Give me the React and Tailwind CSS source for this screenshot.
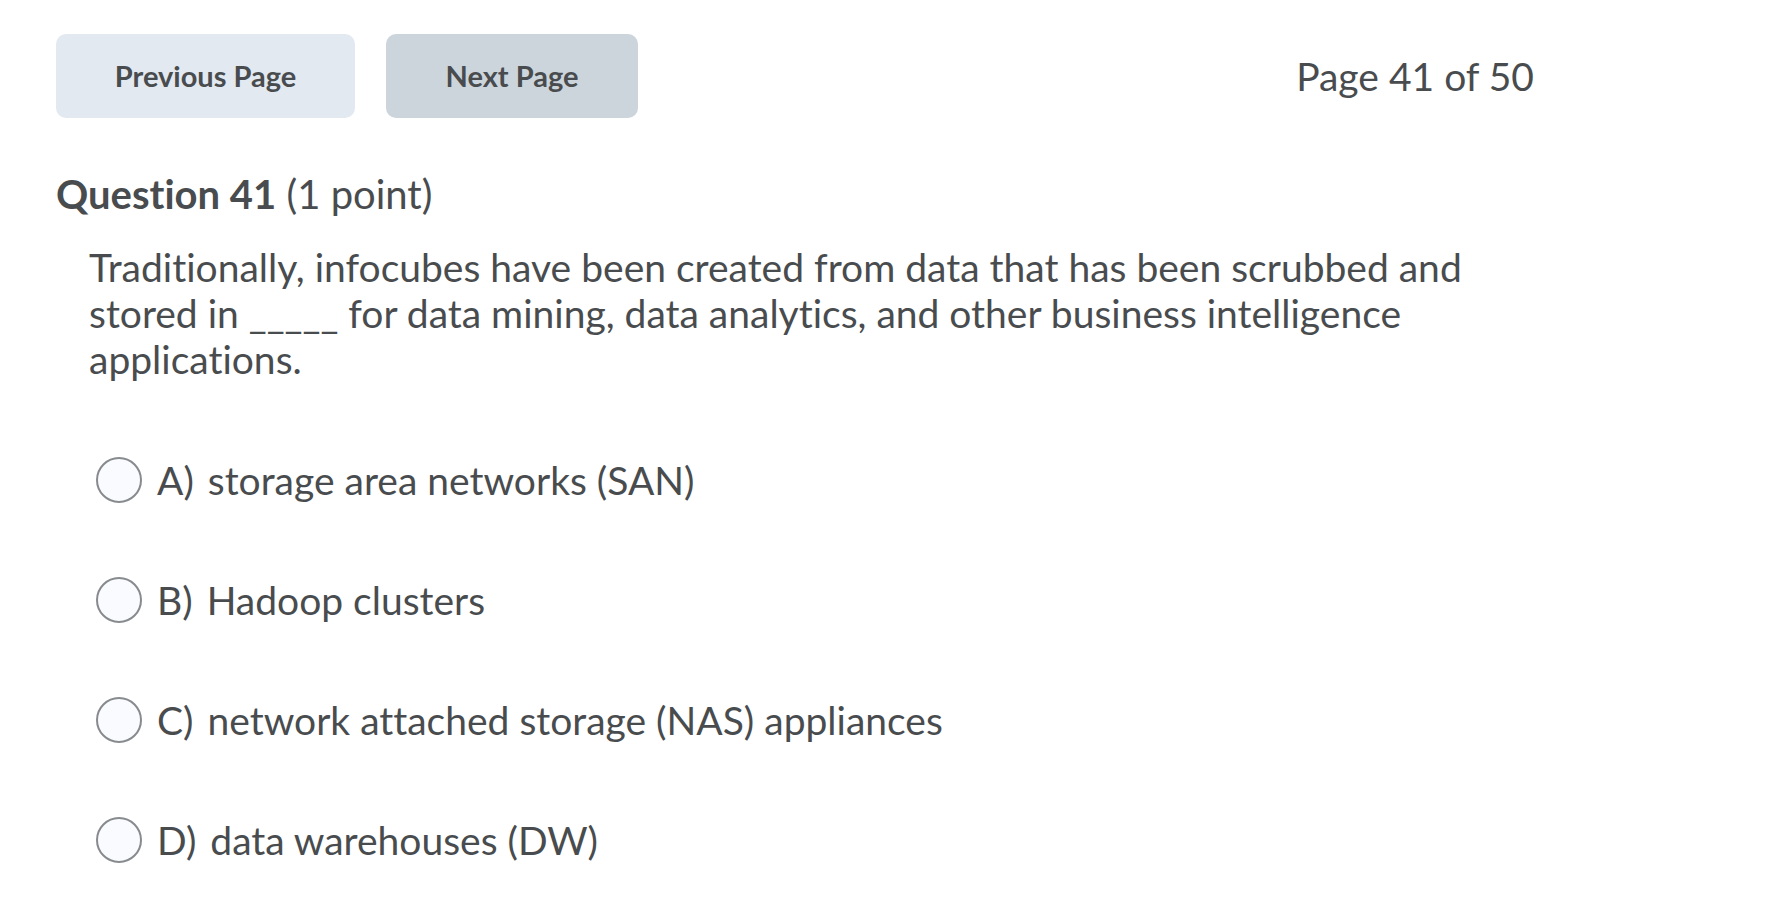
import React from "react";

const options = [
  { key: "A)", text: "storage area networks (SAN)" },
  { key: "B)", text: "Hadoop clusters" },
  { key: "C)", text: "network attached storage (NAS) appliances" },
  { key: "D)", text: "data warehouses (DW)" },
];

export default function App() {
  return (
    <div
      className="min-h-screen bg-white text-[#494c4e] pl-[56px] pt-[34px] [font-variant-ligatures:none]"
      style={{ fontFamily: "Lato, 'Noto Sans', sans-serif" }}
    >
      {/* pager */}
      <div className="flex items-center w-[1478px]">
        <button className="w-[299px] h-[84px] rounded-[10px] bg-[#e3e9f1] text-[29px] font-bold text-[#494c4e]">
          Previous Page
        </button>
        <button className="ml-[31px] w-[252px] h-[84px] rounded-[10px] bg-[#cdd5dc] text-[29px] font-bold text-[#494c4e]">
          Next Page
        </button>
        <div className="ml-auto text-[39px] leading-none">Page 41 of 50</div>
      </div>

      {/* question */}
      <h2 className="mt-[52px] text-[40px] leading-[1.2]">
        <span className="font-bold">Question 41</span> (1 point)
      </h2>

      <div className="mt-[26px] pl-[33px] w-[1440px] text-[39px] leading-[46px]">
        Traditionally, infocubes have been created from data that has been scrubbed and stored in _____ for data mining,
        data analytics, and other business intelligence applications.
      </div>

      <div className="mt-[75px] pl-[40px] flex flex-col gap-[74px]">
        {options.map((o) => (
          <label key={o.key} className="flex items-center h-[46px] text-[39px]">
            <span className="w-[46px] h-[46px] rounded-full border-2 border-[#878b8e] bg-[#f9fbff] shrink-0" />
            <span className="ml-[15px]">{o.key}</span>
            <span className="ml-[14px]">{o.text}</span>
          </label>
        ))}
      </div>
    </div>
  );
}
